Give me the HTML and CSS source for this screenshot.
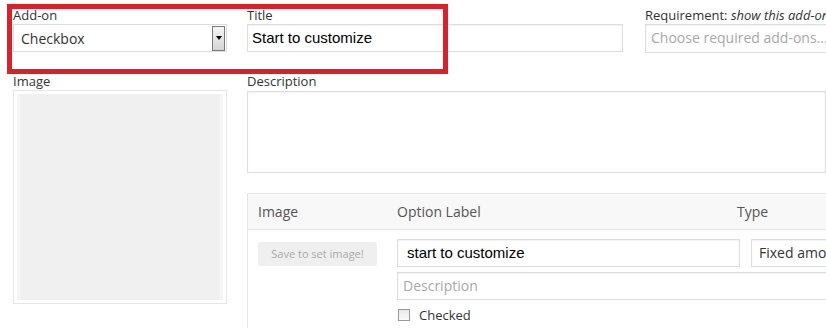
FILE: index.html
```html
<!DOCTYPE html>
<html>
<head>
<meta charset="utf-8">
<link rel="stylesheet" href="styles.css">
</head>
<body>
<div class="page">
  <div class="top">
    <div class="field f-addon">
      <div class="lbl">Add-on</div>
      <div class="select"><span class="sel-text">Checkbox</span><span class="sel-btn"><i class="tri"></i></span></div>
    </div>
    <div class="field f-title">
      <div class="lbl">Title</div>
      <div class="input arial title-in">Start to customize</div>
    </div>
    <div class="field f-req">
      <div class="lbl">Requirement: <em>show this add-on only if</em></div>
      <div class="input ph req-in">Choose required add-ons...</div>
    </div>
  </div>
  <div class="main">
    <div class="col-img">
      <div class="lbl sec">Image</div>
      <div class="imgbox"><div class="imgfill"></div></div>
    </div>
    <div class="col-desc">
      <div class="lbl sec">Description</div>
      <div class="textarea"></div>
      <div class="table">
        <div class="thead">
          <span class="th th-img">Image</span>
          <span class="th th-label">Option Label</span>
          <span class="th th-type">Type</span>
        </div>
        <div class="tbody">
          <div class="td-img"><span class="btn">Save to set image!</span></div>
          <div class="td-label">
            <div class="row1">
              <div class="input arial opt">start to customize</div>
              <div class="input fixed">Fixed amount</div>
            </div>
            <div class="input ph desc">Description</div>
            <div class="chk"><span class="box"></span>Checked</div>
          </div>
        </div>
      </div>
    </div>
  </div>
  <div class="highlight"></div>
</div>
</body>
</html>
```

FILE: styles.css
```css
* { box-sizing: border-box; }
html, body { margin: 0; padding: 0; background: #fff; }
body {
  width: 826px;
  height: 328px;
  overflow: hidden;
  font-family: "Open Sans", "Noto Sans", sans-serif;
  color: #333;
}
.page { position: relative; width: 826px; height: 328px; overflow: hidden; }

.top {
  display: flex;
  padding: 7px 0 0 13px;
  white-space: nowrap;
}
.lbl {
  font-size: 13px;
  line-height: 17px;
  height: 17px;
  color: #333;
}
.lbl em { font-style: italic; }
.f-addon { width: 214px; flex: none; }
.f-title { width: 376px; margin-left: 20px; flex: none; }
.f-req { margin-left: 22px; flex: none; width: 260px; }

.input {
  height: 28px;
  border: 1px solid #ddd;
  box-shadow: inset 0 1px 2px rgba(0,0,0,0.06);
  background: #fff;
  font-size: 14px;
  line-height: 26px;
  padding: 0 5px;
  white-space: nowrap;
  overflow: hidden;
}
.arial { font-family: "Liberation Sans", Arial, sans-serif; font-size: 15px; color: #000; }
.title-in { padding-left: 4px; }
.ph { color: #a8a8a8; }
.req-in { font-size: 14px; padding-left: 5px; height: 29px; }

.select {
  height: 28px;
  border: 1px solid #ddd;
  display: flex;
  align-items: center;
  justify-content: space-between;
  padding: 0 1px 0 7px;
  font-size: 14px;
  color: #333;
  background: #fff;
}
.sel-btn {
  width: 13px;
  height: 25px;
  border: 1px solid #7a7a7a;
  background: linear-gradient(#f6f6f6, #d4d4d4);
  display: flex;
  align-items: center;
  justify-content: center;
}
.tri {
  width: 0; height: 0;
  border-left: 3px solid transparent;
  border-right: 3px solid transparent;
  border-top: 4px solid #000;
}

.main {
  display: flex;
  padding-left: 13px;
  margin-top: 19px;
}
.lbl.sec { height: 18px; line-height: 18px; }
.col-img { width: 214px; flex: none; }
.imgbox {
  width: 214px;
  height: 214px;
  border: 1px solid #e6e6e6;
  padding: 3px;
  background: #fff;
}
.imgfill {
  width: 100%;
  height: 100%;
  background: #f0f0f0;
  border-left: 3px solid #f5f5f5;
  border-right: 3px solid #f5f5f5;
}
.col-desc { margin-left: 20px; width: 579px; flex: none; }
.textarea {
  margin-top: 1px;
  height: 82px;
  border: 1px solid #ddd;
  box-shadow: inset 0 1px 2px rgba(0,0,0,0.06);
}
.table {
  margin-top: 20px;
  width: 640px;
  border: 1px solid #e5e5e5;
}
.thead {
  display: flex;
  height: 36px;
  align-items: center;
  background: #f8f8f8;
  border-bottom: 1px solid #e5e5e5;
  font-size: 14px;
  color: #555;
}
.th-img { width: 149px; padding-left: 10px; flex: none; }
.th-label { width: 340px; flex: none; }
.th-type { flex: none; }
.tbody { display: flex; padding-top: 9px; padding-bottom: 20px; }
.td-img { width: 149px; padding-left: 10px; padding-top: 2px; flex: none; }
.btn {
  display: inline-block;
  width: 119px;
  height: 24px;
  line-height: 24px;
  text-align: center;
  background: #efefef;
  border-radius: 3px;
  font-size: 11px;
  color: #aaa;
}
.td-label { flex: none; width: 480px; }
.row1 { display: flex; }
.opt { width: 343px; padding-left: 9px; height: 28px; }
.fixed { margin-left: 11px; width: 120px; padding-left: 7px; color: #333; font-size: 14px; }
.desc { margin-top: 5px; width: 480px; font-size: 14px; }
.chk {
  display: flex;
  align-items: center;
  margin-top: 8px;
  font-size: 13px;
  line-height: 14px;
  color: #333;
}
.box {
  width: 12px;
  height: 12px;
  border: 1px solid #999;
  background: linear-gradient(#e8e8e8, #fafafa);
  margin: 0 9px 0 1px;
}

.highlight {
  position: absolute;
  left: 7px;
  top: 4px;
  width: 441px;
  height: 70px;
  border: 5px solid #dd1f2a;
  pointer-events: none;
}
```
